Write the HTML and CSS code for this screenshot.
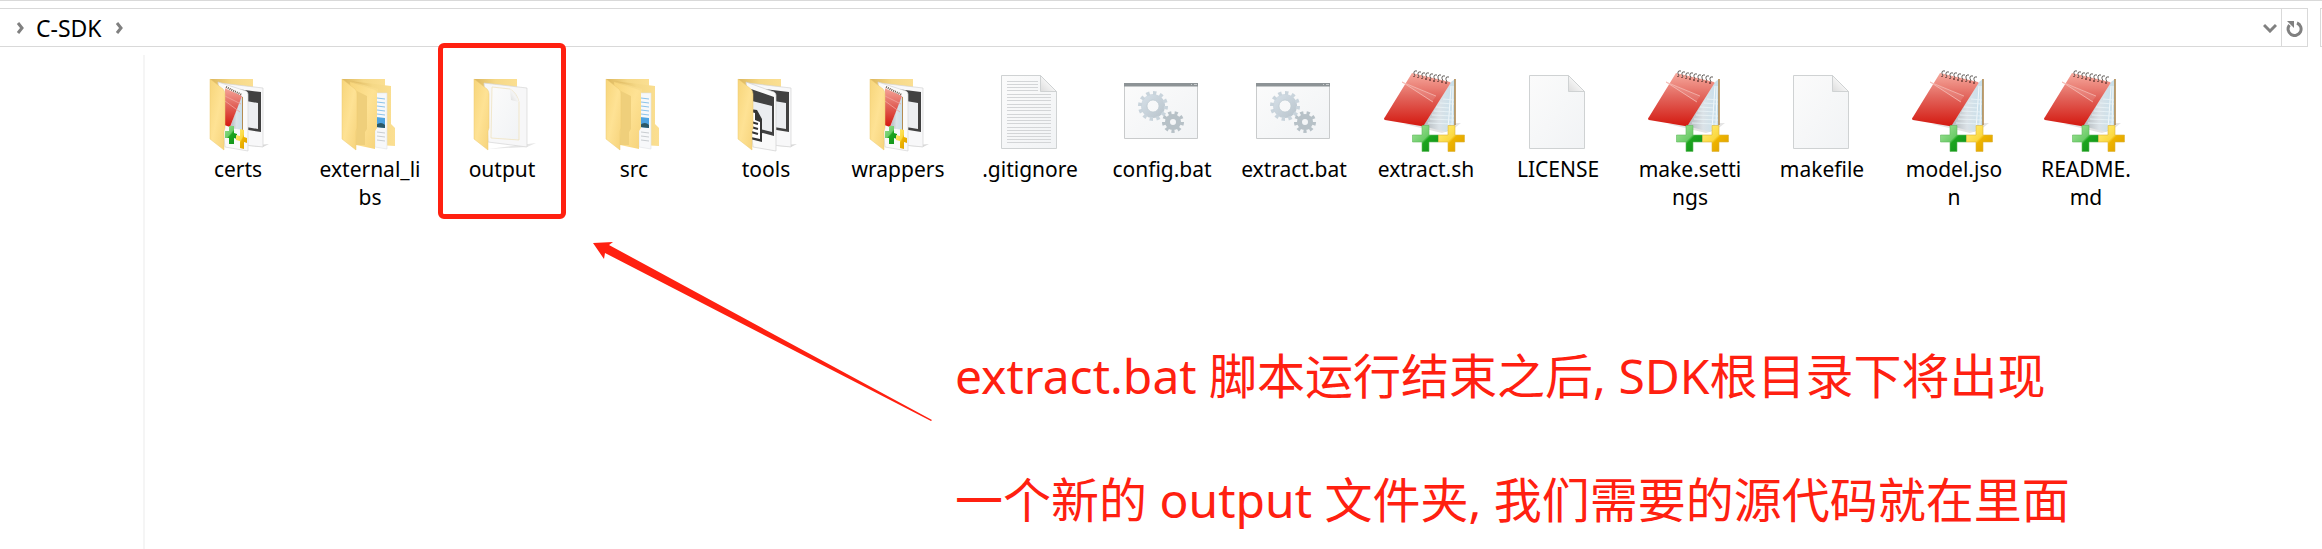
FILE: index.html
```html
<!DOCTYPE html>
<html lang="zh-CN">
<head>
<meta charset="utf-8">
<title>C-SDK</title>
<link rel="stylesheet" href="styles.css">
</head>
<body>
<svg class="defs" aria-hidden="true">
  <defs>
    <linearGradient id="flap" x1="0" y1="0" x2="1" y2="1"><stop offset="0" stop-color="#f7d57a"/><stop offset=".5" stop-color="#fee294"/><stop offset="1" stop-color="#f6d37b"/></linearGradient>
    <linearGradient id="back" x1="0" y1="0" x2="1" y2="0"><stop offset="0" stop-color="#dcb65c"/><stop offset=".5" stop-color="#f5d886"/><stop offset="1" stop-color="#fbdf92"/></linearGradient>
    <linearGradient id="paper" x1="0" y1="0" x2="1" y2="1"><stop offset="0" stop-color="#fbfbfb"/><stop offset="1" stop-color="#f1f3f5"/></linearGradient>
    <linearGradient id="fold" x1="0" y1="1" x2="1" y2="0"><stop offset="0" stop-color="#dcdcdc"/><stop offset=".5" stop-color="#f4f4f4"/><stop offset="1" stop-color="#cfcfcf"/></linearGradient>
    <linearGradient id="red" x1="0" y1="0" x2="0" y2="1"><stop offset="0" stop-color="#f6a99d"/><stop offset=".45" stop-color="#e2655c"/><stop offset="1" stop-color="#d4180f"/></linearGradient>
    <linearGradient id="green" x1="0" y1="0" x2="1" y2="1"><stop offset="0" stop-color="#a5e59c"/><stop offset=".48" stop-color="#6ccc69"/><stop offset=".55" stop-color="#1ca51e"/><stop offset="1" stop-color="#10901a"/></linearGradient>
    <linearGradient id="gold" x1="0" y1="0" x2="1" y2="1"><stop offset="0" stop-color="#fff07c"/><stop offset=".48" stop-color="#fbd840"/><stop offset=".55" stop-color="#eeb400"/><stop offset="1" stop-color="#dc9e00"/></linearGradient>
    <linearGradient id="sheets" x1="0" y1="0" x2="1" y2="0"><stop offset="0" stop-color="#aeb4b8"/><stop offset=".5" stop-color="#dbe2e7"/><stop offset="1" stop-color="#c5dfec"/></linearGradient>
    <linearGradient id="gearA" x1="0" y1="0" x2="1" y2="1"><stop offset="0" stop-color="#d3dde5"/><stop offset="1" stop-color="#bcc7cf"/></linearGradient>
    <clipPath id="inside"><path d="M29 15 52 24V82L29 78Z"/></clipPath>

    <symbol id="folder-back" viewBox="0 0 84 84">
      <path d="M14 10H57V70H14Z" fill="url(#back)"/>
    </symbol>
    <symbol id="folder-flap" viewBox="0 0 84 84">
      <path d="M14 10 27 20Q29 22 29 25V59L28 62V81L14 70Z" fill="url(#flap)" stroke="#edca72" stroke-width=".5"/>
    </symbol>
    <symbol id="photo-back" viewBox="0 0 84 84">
      <path d="M52 77 73 75 67 78Z" fill="#d9d9d9"/>
      <path d="M24 14 67 19V78L40 75Z" fill="#f8f8f9" stroke="#d4d4d4" stroke-width=".7"/>
      <path d="M33 19 65 23V63L40 59Z" fill="#414141"/>
      <path d="M50 32 62 34V60L50 58Z" fill="#eceef1"/>
    </symbol>
    <symbol id="plus" viewBox="0 0 27 27">
      <path d="M10 .5H17V10H26.500V17H17V26.500H10V17H.5V10H10Z"/>
    </symbol>

    <symbol id="i-notes" viewBox="0 0 84 84">
      <use href="#folder-back"/><use href="#photo-back"/>
      <path d="M22 13 50 22Q52 23 52 25V82L29 78Z" fill="#fafafa" stroke="#d6d6d6" stroke-width=".7"/>
      <g clip-path="url(#inside)">
        <path d="M44 30 47 27V61L34 59Z" fill="url(#sheets)"/>
        <path d="M46.500 28V62" stroke="#b48b50"/>
        <path d="M26 18 46 27 34 58 26 55Z" fill="url(#red)"/>
        <path d="M29 32 44 43M29 27 45 35" stroke="#f3a59e" stroke-width=".8"/>
        <path d="M30 18 46 26" stroke="#6c5b4d" stroke-width="2" stroke-dasharray="1 1"/>
        <path d="M33 57H38V64L41 65V70L38 69V75H33V69H26V62H33Z" fill="url(#green)"/>
        <path d="M44 60 48 61V68L51 69V74L48 73V80L44 79V72L40 71V66L44 67Z" fill="url(#gold)"/>
      </g>
      <use href="#folder-flap"/>
    </symbol>

    <symbol id="i-tools" viewBox="0 0 84 84">
      <use href="#folder-back"/><use href="#photo-back"/>
      <path d="M22 13 50 23Q52 24 52 26V82L29 78Z" fill="#fafafa" stroke="#d0d0d0" stroke-width=".7"/>
      <path d="M27 20 50 28V67L27 61Z" fill="#414141"/>
      <path d="M28 32 48 37V63L28 58Z" fill="#ebedf0"/>
      <path d="M26 40 33 41 38 50V73L26 70Z" fill="#353535"/>
      <path d="M27 43 31 44V51L36 53V70L27 68Z" fill="#fff"/>
      <path d="M27 53 34 55M27 58 34 60M27 63 34 65" stroke="#353535" stroke-width="2"/>
      <use href="#folder-flap"/>
    </symbol>

    <symbol id="i-nested" viewBox="0 0 84 84">
      <use href="#folder-back"/>
      <path d="M22 12 63 17V55L67 59V77L50 76V20Z" fill="url(#back)"/>
      <path d="M47 24H59V80L47 78Z" fill="#f7f8fa" stroke="#dfe2e5" stroke-width=".6"/>
      <path d="M49 29 57 30M49 33 57 34M49 37 57 38M49 41 57 42M49 45 57 46" stroke="#8cc3ea"/>
      <path d="M48 48 57 49V59L48 58Z" fill="#4ea3e0"/><path d="M48 56Q53 52 57 56V59L48 58Z" fill="#2b5866"/>
      <path d="M49 63 57 64M49 67 57 68M49 71 57 72" stroke="#c9cdd1"/>
      <path d="M22 13 47 21Q49 22 49 24V59L47 62V80L28 76Z" fill="url(#flap)"/>
      <path d="M29 22 39 27V60L37 63V76L28 76Z" fill="#efcf7b"/>
      <use href="#folder-flap"/>
    </symbol>

    <symbol id="i-output" viewBox="0 0 84 84">
      <use href="#folder-back"/>
      <path d="M28 80 76 74 67 78Z" fill="#e6e6e6"/>
      <path d="M24 14 67 19V78L28 73Z" fill="#f7f7f8" stroke="#d6d6d6" stroke-width=".7"/>
      <path d="M32 18 50 20Q57 24 59 33V71L31 69Z" fill="url(#paper)" stroke="#eee0b8" stroke-width=".7"/>
      <path d="M50 20Q57 25 59 33L51 31Z" fill="url(#fold)"/>
      <use href="#folder-flap"/>
    </symbol>

    <symbol id="i-file" viewBox="0 0 84 84">
      <path d="M13.500 6.500H52.500L68.500 22.500V79.500H13.500Z" fill="url(#paper)" stroke="#cfd2d3"/>
      <path d="M52.500 6.500V22.500H68.500Z" fill="url(#fold)" stroke="#cfd2d3"/>
    </symbol>

    <symbol id="i-text" viewBox="0 0 84 84">
      <use href="#i-file"/>
      <path d="M19 12.500H50M19 15.500H50M19 18.500H50M19 21.500H50M19 25.500H63M19 28.500H63M19 31.500H63M19 35.500H63M19 38.500H63M19 41.500H63M19 45.500H63M19 48.500H63M19 51.500H63M19 54.500H63M19 58.500H63M19 61.500H63M19 64.500H63M19 67.500H63M19 70.500H63M19 73.500H63" stroke="#d3d5d7"/>
    </symbol>

    <symbol id="i-batch" viewBox="0 0 84 84">
      <path d="M4.500 14.500H77.500V69.500H4.500Z" fill="url(#paper)" stroke="#c9cbcc"/>
      <path d="M4 14H78V17.500H4Z" fill="#8d9396"/>
      <path d="M71 15.500H72M74 15.500H77" stroke="#c9cccd"/>
      <circle cx="33" cy="37" r="9" fill="none" stroke="url(#gearA)" stroke-width="6"/>
      <circle cx="33" cy="37" r="13" fill="none" stroke="#c9d4dc" stroke-width="4" pathLength="24" stroke-dasharray="1 1"/>
      <circle cx="33" cy="37" r="6" fill="none" stroke="#bcc8d0" stroke-width=".7"/>
      <circle cx="53" cy="53" r="5.500" fill="none" stroke="#b7c1c7" stroke-width="5"/>
      <circle cx="53" cy="53" r="9" fill="none" stroke="#b7c1c7" stroke-width="4" pathLength="18" stroke-dasharray="1 1"/>
    </symbol>

    <symbol id="i-notepad" viewBox="0 0 84 84">
      <path d="M20 55 77 54 68 61 58 64Z" fill="#e4e4e4"/>
      <path d="M67 13 71 10V56L62 63 39 57Z" fill="url(#sheets)"/>
      <path d="M67 17 64 61M69 17 68 58" stroke="#f3f8fa"/>
      <path d="M52 38 66 39M50 42 69 43M48 46 70 47M46 50 70 51M44 54 68 55M56 34 70 35M59 30 70 31" stroke="#eaf4f8" stroke-width=".8"/>
      <path d="M71 10V56" stroke="#ad8244" stroke-width="1.500"/>
      <path d="M28 4 66 13Q67 14 66 15L40 56Q39 58 37 57L1 51Q-1 50 1 48Z" fill="url(#red)"/>
      <path d="M18 13 49 33M18 13 52 27" stroke="#f4b5ad" stroke-width=".8"/>
      <path d="M18 13 52 27 48 33Z" fill="#fff" opacity=".12"/>
      <g fill="none" stroke="#66615e" stroke-width="1">
        <path d="M31 7Q28 1 33 2M35 8Q32 2 37 3M39 9Q36 3 41 4M43 9Q40 3 45 4M47 10Q44 4 49 5M51 11Q48 5 53 6M55 12Q52 5 57 6M59 12Q56 6 61 7M63 13Q60 7 65 8"/>
      </g>
      <path d="M30 7V8M34 8V9M38 9V10M42 9V11M46 10V12M50 11V13M54 12V13M58 12V14M62 13V15" stroke="#713e39" stroke-width="1.500"/>
      <use href="#plus" x="28" y="56" width="27" height="27" fill="url(#green)" stroke="#61ba5e" stroke-width=".6"/>
      <use href="#plus" x="54" y="56" width="27" height="27" fill="url(#gold)" stroke="#dcb43a" stroke-width=".6"/>
    </symbol>
  </defs>
</svg>

<header class="toolbar">
  <nav class="address" aria-label="Address">
    <svg class="chevron" viewBox="0 0 8 12"><path d="M2 1 6 6 2 11"/></svg>
    <a class="crumb" href="#">C-SDK</a>
    <svg class="chevron" viewBox="0 0 8 12"><path d="M2 1 6 6 2 11"/></svg>
    <button class="history" aria-label="Previous locations"><svg width="14" height="10" viewBox="0 0 14 10"><path d="M1 2 7 8 13 2"/></svg></button>
    <button class="refresh" aria-label="Refresh"><svg width="18" height="18" viewBox="0 0 18 18"><path d="M11 4A6.500 6.500 0 1 1 3.500 6"/><path class="solid" d="M1 2H8V9Z"/></svg></button>
  </nav>
  <div class="search"></div>
</header>

<div class="window">
  <aside class="sidebar"></aside>
  <main class="content">
    <ul class="files">
      <li class="file"><svg class="icon"><use href="#i-notes"/></svg><span>certs</span></li>
      <li class="file"><svg class="icon"><use href="#i-nested"/></svg><span>external_li<br>bs</span></li>
      <li class="file marked"><svg class="icon"><use href="#i-output"/></svg><span>output</span></li>
      <li class="file"><svg class="icon"><use href="#i-nested"/></svg><span>src</span></li>
      <li class="file"><svg class="icon"><use href="#i-tools"/></svg><span>tools</span></li>
      <li class="file"><svg class="icon"><use href="#i-notes"/></svg><span>wrappers</span></li>
      <li class="file"><svg class="icon"><use href="#i-text"/></svg><span>.gitignore</span></li>
      <li class="file"><svg class="icon"><use href="#i-batch"/></svg><span>config.bat</span></li>
      <li class="file"><svg class="icon"><use href="#i-batch"/></svg><span>extract.bat</span></li>
      <li class="file"><svg class="icon"><use href="#i-notepad"/></svg><span>extract.sh</span></li>
      <li class="file"><svg class="icon"><use href="#i-file"/></svg><span>LICENSE</span></li>
      <li class="file"><svg class="icon"><use href="#i-notepad"/></svg><span>make.setti<br>ngs</span></li>
      <li class="file"><svg class="icon"><use href="#i-file"/></svg><span>makefile</span></li>
      <li class="file"><svg class="icon"><use href="#i-notepad"/></svg><span>model.jso<br>n</span></li>
      <li class="file"><svg class="icon"><use href="#i-notepad"/></svg><span>README.<br>md</span></li>
    </ul>
    <div class="note">
      <p>extract.bat 脚本运行结束之后, SDK根目录下将出现</p>
      <p>一个新的 output 文件夹, 我们需要的源代码就在里面</p>
    </div>
  </main>
</div>
<svg class="arrow" viewBox="0 0 340 180" aria-hidden="true"><path d="M0 2 20 1 16 4 339 179 338 180 12 12 11 18Z"/></svg>
</body>
</html>
```

FILE: styles.css
```css
* { box-sizing: border-box; }

body {
  margin: 0;
  min-height: 100vh;
  display: flex;
  flex-direction: column;
  position: relative;
  background: #fff;
  color: #000;
  font-family: "Noto Sans", "Noto Sans CJK SC", sans-serif;
  font-size: 21px;
  line-height: 28px;
}

.defs { position: absolute; width: 0; height: 0; }

.toolbar {
  display: flex;
  gap: 12px;
  padding: 7px 0 8px;
  border-top: 1px solid #d9d9d9;
}

.address {
  flex: 1;
  display: flex;
  align-items: center;
  height: 39px;
  padding-left: 16px;
  border: 1px solid #d9d9d9;
  border-left: 0;
}

.search {
  width: 2px;
  border: 1px solid #d9d9d9;
  border-right: 0;
}

.chevron {
  width: 8px;
  height: 12px;
  fill: none;
  stroke: #808080;
  stroke-width: 3;
}

.crumb {
  margin: 0 13px 0 12px;
  color: inherit;
  font-size: 23px;
  text-decoration: none;
}

.history,
.refresh {
  display: flex;
  align-items: center;
  justify-content: center;
  height: 100%;
  padding: 0;
  border: 0;
  background: none;
  fill: none;
  stroke: #808080;
  stroke-width: 3;
}

.history { width: 22px; margin-left: auto; }
.refresh { width: 26px; border-left: 1px solid #d9d9d9; }
.solid { fill: #808080; stroke: none; }

.window { flex: 1; display: flex; }

.sidebar { width: 145px; border-right: 2px solid #f5f5f5; }

.content { flex: 1; padding: 14px 0 0 27px; }

.files {
  display: grid;
  grid-template-columns: repeat(auto-fill, 132px);
  margin: 0;
  padding: 0;
  list-style: none;
}

.file {
  position: relative;
  display: flex;
  flex-direction: column;
  align-items: center;
  gap: 2px;
  text-align: center;
}

.icon { width: 84px; height: 84px; overflow: visible; }

.marked::after {
  content: "";
  position: absolute;
  inset: -26px 2px -8px;
  border: 5px solid #ff2010;
  border-radius: 6px;
}

.note {
  display: flex;
  flex-direction: column;
  gap: 52px;
  margin: 129px 0 0 783px;
  color: #ff2010;
  font-size: 48px;
  line-height: 72px;
}

.note p { margin: 0; }

.arrow {
  position: absolute;
  left: 593px;
  top: 241px;
  width: 340px;
  height: 180px;
  fill: #ff2010;
}
```
